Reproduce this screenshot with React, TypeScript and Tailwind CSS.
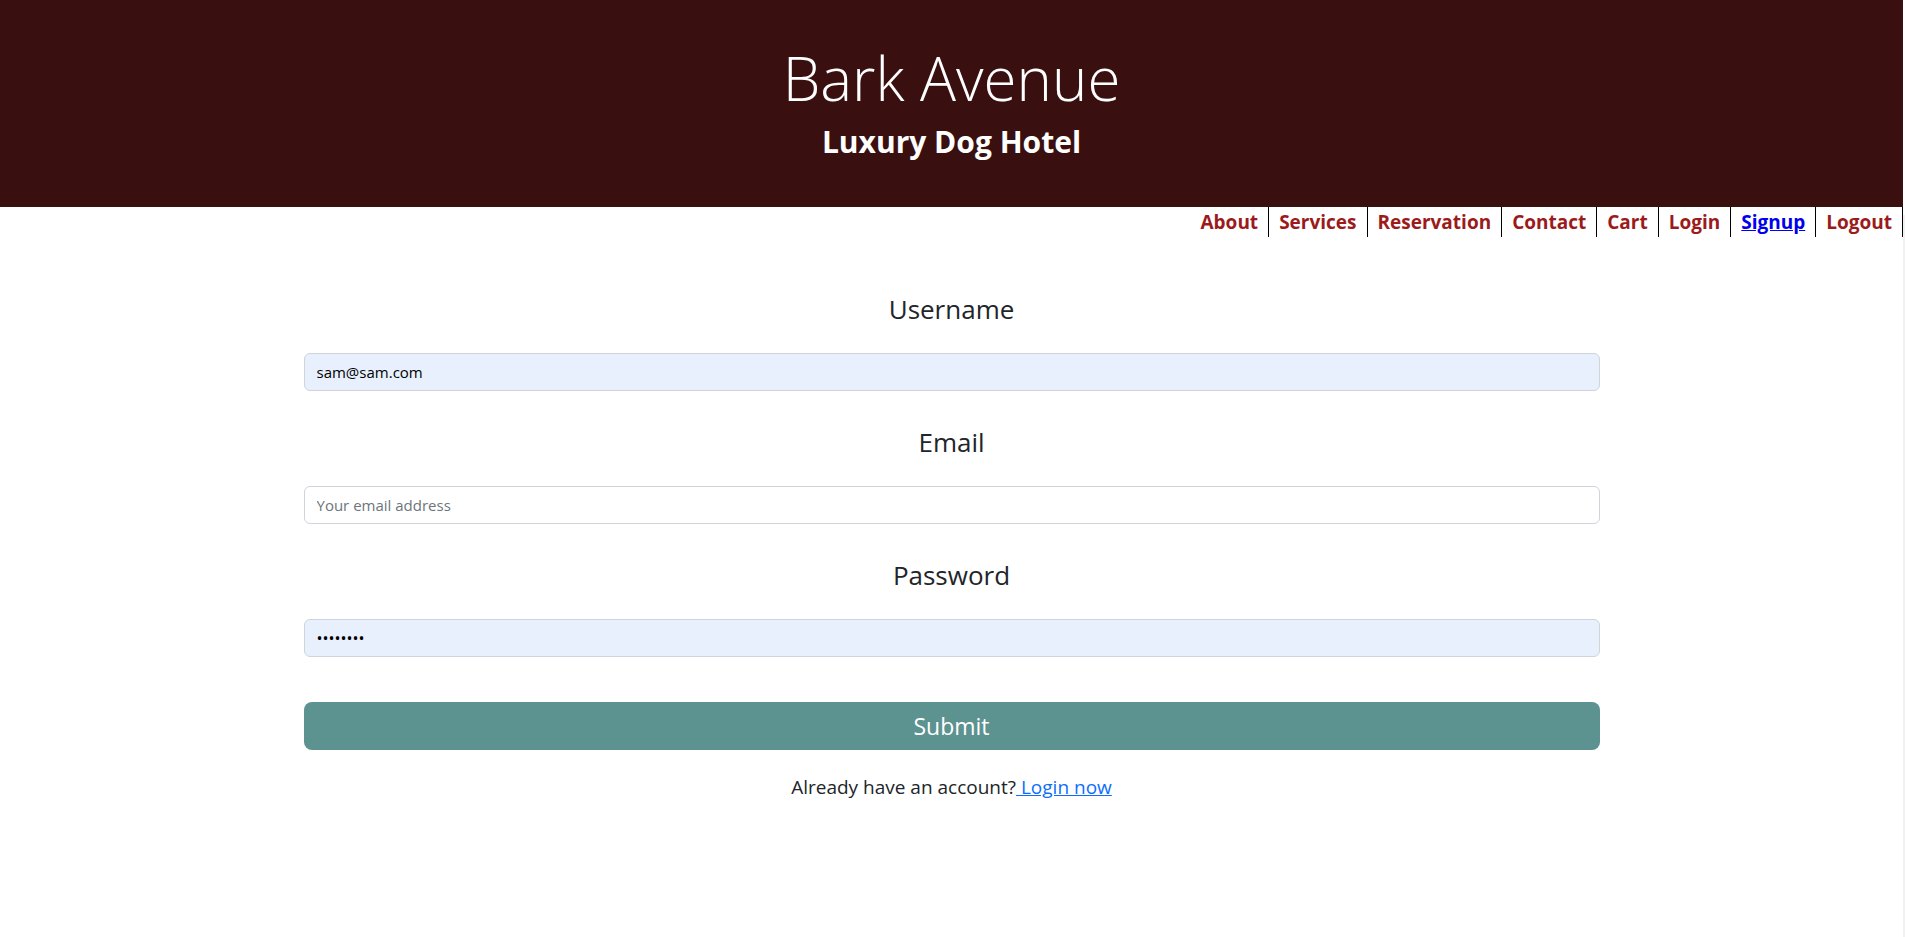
import React from "react";

const font = { fontFamily: '"Open Sans", "Noto Sans", sans-serif' };

function NavItem({ label, active }: { label: string; active?: boolean }) {
  return (
    <a
      href="#"
      className={
        "border-r border-black px-[10px] h-[30px] flex items-center text-[19px] font-bold leading-[30px] " +
        (active ? "text-[#0000ee] underline" : "text-[#9b1b1b] no-underline")
      }
    >
      {label}
    </a>
  );
}

function Field({ label, children }: { label: string; children: React.ReactNode }) {
  return (
    <div className="flex flex-col">
      <label className="text-center text-[26px] leading-[32px] text-[#212529]">{label}</label>
      <div className="mt-[28px]">{children}</div>
    </div>
  );
}

export default function App() {
  return (
    <div className="flex w-full min-h-[937px] bg-white" style={font}>
      <div className="flex-1 flex flex-col">
        <header className="h-[207px] bg-[#3a0f10] flex flex-col items-center">
          <h1 className="mt-[42px] text-[60px] font-light leading-[72px] text-white">Bark Avenue</h1>
          <h2 className="mt-[8px] text-[30px] font-bold leading-[40px] text-white">Luxury Dog Hotel</h2>
        </header>
        <nav className="flex justify-end h-[30px]">
          {["About", "Services", "Reservation", "Contact", "Cart", "Login"].map((l) => (
            <NavItem key={l} label={l} />
          ))}
          <NavItem label="Signup" active />
          <NavItem label="Logout" />
        </nav>
        <main className="w-[1296px] mx-auto mt-[56px] flex flex-col">
          <Field label="Username">
            <input
              defaultValue="sam@sam.com"
              className="w-full h-[38px] rounded-[6px] border border-[#ced4da] bg-[#e8f0fe] px-[12px] text-[15px] text-black outline-none"
            />
          </Field>
          <div className="mt-[35px]">
            <Field label="Email">
              <input
                placeholder="Your email address"
                className="w-full h-[38px] rounded-[6px] border border-[#ced4da] bg-white px-[12px] text-[15px] text-black placeholder:text-[#6c757d] outline-none"
              />
            </Field>
          </div>
          <div className="mt-[35px]">
            <Field label="Password">
              <input
                type="password"
                defaultValue="password"
                className="w-full h-[38px] rounded-[6px] border border-[#ced4da] bg-[#e8f0fe] px-[12px] text-[16px] text-black outline-none"
              />
            </Field>
          </div>
          <button className="mt-[45px] w-full h-[48px] rounded-[8px] bg-[#5c9290] text-white text-[23px]">
            Submit
          </button>
          <p className="mt-[22px] text-center text-[19px] leading-[30px] text-[#212529]">
            Already have an account?
            <a href="#" className="text-[#0d6efd] underline"> Login now</a>
          </p>
        </main>
      </div>
      <div className="w-[2px] flex flex-col">
        <div className="h-[215px] bg-white" />
        <div className="flex-1 bg-[#f1f1f1]" />
      </div>
    </div>
  );
}
